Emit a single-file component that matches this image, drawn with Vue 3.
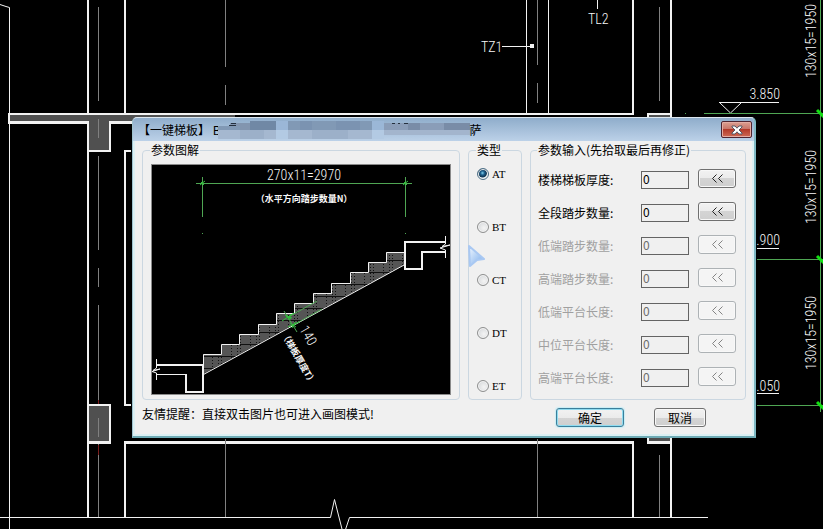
<script setup>
import { reactive, ref } from 'vue'

const types = ['AT', 'BT', 'CT', 'DT', 'ET']
const selected = ref('AT')

const params = reactive([
  { id: 'thickness', label: '楼梯梯板厚度:', value: '0', enabled: true },
  { id: 'steps', label: '全段踏步数量:', value: '0', enabled: true },
  { id: 'low-steps', label: '低端踏步数量:', value: '0', enabled: false },
  { id: 'high-steps', label: '高端踏步数量:', value: '0', enabled: false },
  { id: 'low-landing', label: '低端平台长度:', value: '0', enabled: false },
  { id: 'mid-landing', label: '中位平台长度:', value: '0', enabled: false },
  { id: 'high-landing', label: '高端平台长度:', value: '0', enabled: false }
])

const levels = [113, 259, 405]
const risers = [41, 187, 333]
</script>

<template>
  <main class="workspace">
    <svg class="plan" aria-hidden="true">
      <!-- slab and columns -->
      <g class="fill-slab">
        <rect x="10" y="115" width="225" height="7" />
        <rect x="89" y="120" width="21" height="31" />
        <rect x="89" y="406" width="21" height="36" />
        <rect x="649" y="115" width="21" height="4" />
        <rect x="649" y="436" width="21" height="5" />
      </g>
      <g class="fill-white">
        <rect x="87" y="0" width="2" height="113" />
        <rect x="124" y="0" width="2" height="113" />
        <rect x="8" y="113" width="626" height="2" />
        <rect x="8" y="113" width="2" height="11" />
        <rect x="8" y="121" width="81" height="3" />
        <rect x="109" y="121" width="26" height="3" />
        <rect x="109" y="121" width="2" height="31" />
        <rect x="89" y="150" width="22" height="2" />
        <rect x="87" y="121" width="2" height="396" />
        <rect x="124" y="150" width="7" height="2" />
        <rect x="124" y="150" width="2" height="256" />
        <rect x="124" y="404" width="7" height="2" />
        <rect x="87" y="404" width="24" height="2" />
        <rect x="109" y="404" width="2" height="40" />
        <rect x="87" y="441" width="24" height="3" />
        <rect x="124" y="441" width="2" height="76" />
        <rect x="124" y="441" width="510" height="3" />
        <rect x="632" y="441" width="2" height="76" />
        <rect x="632" y="0" width="2" height="115" />
        <rect x="670" y="0" width="2" height="117" />
        <rect x="647" y="113" width="25" height="2" />
        <rect x="647" y="113" width="2" height="4" />
        <rect x="647" y="436" width="2" height="8" />
        <rect x="647" y="441" width="25" height="3" />
        <rect x="670" y="436" width="2" height="81" />
        <rect x="530" y="44" width="4" height="4" />
      </g>
      <g class="thin">
        <path d="M0 4.500L3 5.500L6 6.500L9.500 7.500V529" />
        <path d="M0 517.500H330.500L334.500 499.500L342.500 531H345L349.500 517.500H708" />
        <path d="M526.500 0V113M548.500 0V113M502 46.500H530M597.500 0V9" />
        <path d="M719 102.500H779M719.500 102.500L730.500 113L741.500 102.500M757 248.500H779M757 393.500H779" />
      </g>
      <g class="axis">
        <path d="M98.500 7V101M98.500 119V138M98.500 156V250M98.500 268V287M98.500 305V404M98.500 418V437M98.500 444V517" />
        <path d="M225.500 0V67M225.500 85V105M225.500 439V517" />
        <path d="M537.500 0V65M537.500 83V103M537.500 439V517" />
        <path d="M659.500 7V101M659.500 455V517" />
      </g>
      <path class="red" d="M98.500 400V404M98.500 445V455" />
      <g class="green">
        <path d="M704 113.500H823M757 259.500H823M757 405.500H823M820.500 0V412" />
        <path d="M685 113.500H686" />
      </g>
      <path v-for="y in levels" :key="y" class="tick" :d="`M817 ${y - 3}L824 ${y + 4}`" />
      <g class="cad">
        <text x="481" y="52">TZ1</text>
        <text x="588" y="24">TL2</text>
        <text x="780" y="99" text-anchor="end">3.850</text>
        <text x="780" y="245" text-anchor="end">.900</text>
        <text x="780" y="391" text-anchor="end">.050</text>
        <text
          v-for="y in risers"
          :key="y"
          :transform="`translate(816 ${y}) rotate(-90)`"
          text-anchor="middle"
        >130x15=1950</text>
      </g>
    </svg>

    <section class="dialog" role="dialog" aria-labelledby="dialog-title">
      <header class="titlebar">
        <h1 id="dialog-title" class="title">
          <span>【一键梯板】 B</span>
          <svg class="mosaic" viewBox="0 0 252 18" aria-hidden="true">
            <path fill="#8295af" d="M12 2H58V9H12z" />
            <path fill="#7088a5" d="M32 0H58V9H32z" />
            <path fill="#8199b5" d="M0 5H22V9H0zM70 0H154V9H70z" />
            <path fill="#7b93b1" d="M82 0H94V9H82zM118 0H142V9H118z" />
            <path fill="#8a9db8" d="M166 2H252V9H166z" />
            <path fill="#798ca7" d="M190 2H202V9H190zM226 2H252V9H226z" />
            <path fill="#9bb7d7" d="M58 0H70V9H58zM154 0H166V9H154z" />
            <path fill="#a5b8d0" d="M0 9H58V18H0zM70 9H154V18H70z" />
            <path fill="#9cb0c9" d="M22 9H46V18H22zM94 9H130V18H94z" />
            <path fill="#b3cae3" d="M58 9H70V18H58zM154 9H166V18H154z" />
            <path fill="#a3b5cd" d="M166 9H252V14H166z" />
            <path fill="#25303e" d="M13 2h5v1h-5zM11 4h7v1h-7zM174 2h3v1h-3zM180 2h2v1h-2zM186 2h4v1h-4z" />
          </svg>
          <span>萨</span>
        </h1>
        <button class="close" type="button" aria-label="关闭">
          <svg viewBox="0 0 12 10" width="12" height="10" aria-hidden="true">
            <path d="M1 1H4L6 3.200L8 1H11V2L8 5L11 8V9H8L6 6.800L4 9H1V8L4 5L1 2Z" />
          </svg>
        </button>
      </header>

      <form class="body" @submit.prevent>
        <div class="panels">
          <fieldset class="group preview">
            <legend>参数图解</legend>
            <svg class="diagram" viewBox="152 165 298 229" role="img" aria-label="参数图解">
              <defs>
                <pattern id="hatch" width="19" height="12" patternUnits="userSpaceOnUse">
                  <rect width="19" height="12" fill="#555" />
                  <path d="M0 8.500H19" stroke="#111" />
                  <path d="M3.500 0V12M9.500 0V12M12.500 0V12" stroke="#111" stroke-dasharray="1 2" />
                </pattern>
              </defs>
              <path
                fill="url(#hatch)"
                d="M203 374V354H221V344H239V334H258V324H276V313H294V303H313V293H331V283H350V272H368V262H386V252H404V265Z"
              />
              <path
                class="thin"
                d="M203.500 374V354.500H221.500V344.500H239.500V334.500H258.500V324.500H276.500V313.500H294.500V303.500H313.500V293.500H331.500V283.500H350.500V272.500H368.500V262.500H386.500V252.500H405M203.500 374.500L405 264.500"
              />
              <path class="thick" d="M157 365H203V392H186V374M445 242H405V269H422V252H445" />
              <path class="thin" d="M157 374.500H186M156.500 359V368L153 370.500L160 369L152 371.500L156.500 373V380" />
              <path class="thin" d="M445.500 236V244L442 246.500L450 245L440 248L445.500 250V258" />
              <path class="green" d="M196 183.500H412M202.500 177V217M405.500 177V217M202 233.500H203M405 233.500H406" />
              <path class="spark" d="M200 185L205 181M201 182L204 185M403 185L408 181M404 182L407 185" />
              <path class="green" d="M284 311L297 332M288.500 317L317 301M293.500 325L322 309" />
              <path
                class="spark"
                d="M282 321L294 313M285 315L292 318M288 320L291 314M286 316L291 319M288 327L299 322M290 323L296 327M292 328L295 322"
              />
              <g class="cad">
                <text x="304" y="180" text-anchor="middle">270x11=2970</text>
                <text class="note" x="304" y="202" text-anchor="middle">（水平方向踏步数量N）</text>
                <text transform="translate(299 329) rotate(60)">140</text>
                <text class="note" transform="translate(281 334) rotate(60)">（梯板厚度T）</text>
              </g>
            </svg>
          </fieldset>

          <fieldset class="group types">
            <legend>类型</legend>
            <label v-for="t in types" :key="t" class="type">
              <input v-model="selected" type="radio" name="type" :value="t" />
              <span>{{ t }}</span>
            </label>
          </fieldset>

          <fieldset class="group params">
            <legend>参数输入(先拾取最后再修正)</legend>
            <div v-for="p in params" :key="p.id" class="row" :class="{ off: !p.enabled }">
              <label :for="p.id">{{ p.label }}</label>
              <input :id="p.id" v-model="p.value" type="text" :disabled="!p.enabled" />
              <button type="button" class="btn" :disabled="!p.enabled" :aria-label="`拾取 ${p.label}`">
                <svg viewBox="0 0 12 9" width="12" height="9" aria-hidden="true">
                  <path d="M5.500 0.500L1.500 4.500L5.500 8.500M11.500 0.500L7.500 4.500L11.500 8.500" />
                </svg>
              </button>
            </div>
          </fieldset>
        </div>

        <footer class="footer">
          <p class="hint">友情提醒：直接双击图片也可进入画图模式!</p>
          <button type="submit" class="btn ok">确定</button>
          <button type="button" class="btn cancel">取消</button>
        </footer>
      </form>
    </section>

    <svg class="pointer" viewBox="0 0 20 26" width="20" height="26" aria-hidden="true">
      <defs>
        <linearGradient id="arrow" x1="0" y1="0" x2="1" y2="1">
          <stop offset="0" stop-color="#f2f8ff" />
          <stop offset="1" stop-color="#74a9ea" />
        </linearGradient>
      </defs>
      <path d="M2 3L17 16L10 17L3 23Z" fill="url(#arrow)" stroke="#a9c8f2" stroke-width="2" stroke-linejoin="round" />
    </svg>
  </main>
</template>

<style>
body {
  margin: 0;
  background: #000;
}
</style>

<style scoped>
.workspace {
  position: relative;
  min-height: 100vh;
  overflow: hidden;
  background: #000;
  font: 12px/14px "Noto Sans CJK SC", sans-serif;
  color: #000;
}
.plan {
  position: absolute;
  inset: 0;
  width: 100%;
  height: 100%;
}
.fill-slab { fill: #505050; }
.fill-white { fill: #f2f2f2; }
.thin { fill: none; stroke: #f2f2f2; stroke-width: 1; }
.thick { fill: none; stroke: #f2f2f2; stroke-width: 2; }
.axis { fill: none; stroke: #808080; }
.red { fill: none; stroke: #7a1d1d; }
.green { fill: none; stroke: #4fa653; }
.tick { fill: none; stroke: #12e012; stroke-width: 3; }
.spark { fill: none; stroke: #2fc43a; }
.cad {
  fill: #f8f8f8;
  font-family: "Roboto Condensed", Roboto, sans-serif;
  font-size: 14px;
  font-weight: 300;
}
.cad .note {
  font-family: "Noto Sans CJK SC", sans-serif;
  font-size: 9px;
  font-weight: 700;
}

.dialog {
  position: absolute;
  left: 132px;
  top: 117px;
  width: 624px;
  box-sizing: border-box;
  border: 1px solid #9fc3cf;
  border-top-color: #dce6ee;
  border-right: 2px solid #7fb9c4;
  border-bottom: 2px solid #6fabb5;
  border-radius: 5px 5px 0 0;
  background: #f0f0f0;
  box-shadow: inset 0 0 0 2px #dcf0f3;
  overflow: hidden;
}
.titlebar {
  display: flex;
  align-items: center;
  justify-content: space-between;
  height: 23px;
  padding: 0 2px 0 5px;
  background: linear-gradient(#8fadcb, #bcd1e8);
}
.title {
  display: flex;
  align-items: center;
  margin: 0;
  font-size: 12px;
  font-weight: 400;
  line-height: 23px;
  white-space: pre;
}
.mosaic { width: 252px; height: 18px; margin-left: -3px; }
.close {
  display: flex;
  align-items: center;
  justify-content: center;
  width: 31px;
  height: 17px;
  padding: 0;
  border: 1px solid #4f2430;
  border-radius: 2px;
  background: linear-gradient(#dca092 0, #c9766a 45%, #b33a2a 50%, #cf6a55 100%);
  box-shadow: inset 0 0 0 1px #e4aca3;
}
.close path { fill: #fff; stroke: #555763; stroke-width: 1; }

.body { padding: 2px 8px 0 9px; }
.panels {
  display: grid;
  grid-template-columns: 318px 54px 1fr;
  gap: 8px;
}
.group {
  box-sizing: border-box;
  min-width: 0;
  margin: 0;
  border: 1px solid #cbd7e1;
  border-radius: 4px;
}
.group legend {
  height: 14px;
  padding: 0 1px;
  line-height: 14px;
  white-space: nowrap;
}
.preview { padding: 7px 8px 4px; }
.preview legend { margin-left: -1px; }
.diagram {
  display: block;
  box-sizing: border-box;
  width: 100%;
  border: 1px solid #8a8a8a;
  background: #000;
}
.types {
  display: flex;
  flex-direction: column;
  justify-content: space-between;
  padding: 10px 7px 6px 8px;
}
.types legend { margin-left: -1px; }
.type {
  display: flex;
  align-items: center;
  gap: 3px;
  height: 14px;
  font-family: "Liberation Serif", serif;
  font-size: 11px;
}
.type input {
  appearance: none;
  flex: none;
  box-sizing: border-box;
  width: 12px;
  height: 12px;
  margin: 0;
  border: 1px solid #8e8f8f;
  border-radius: 50%;
  background: radial-gradient(circle at 60% 60%, #f4f4f4, #cfd2d5);
  box-shadow: inset 0 0 0 1px #f4f4f4;
}
.type input:checked {
  border-color: #4d6f86;
  background: radial-gradient(circle at 45% 40%, #7fd0ee 0, #1d5f8c 2px, #0f3350 4px, #e8f0f4 5px);
}
.params { padding: 6px 9px 5px 7px; }
.params legend { margin-left: -1px; }
.row {
  display: grid;
  grid-template-columns: 1fr 48px 38px;
  column-gap: 9px;
  align-items: center;
  height: 33px;
}
.row.off { color: #a0a0a0; }
.row input {
  box-sizing: border-box;
  width: 100%;
  height: 18px;
  padding: 0 1px 2px;
  border: 1px solid #646464;
  background: #f0f0f0;
  color: #000;
  font: 12px/14px "Noto Sans CJK SC", sans-serif;
}
.row.off input { color: #6d6d6d; }
.btn {
  box-sizing: border-box;
  height: 19px;
  padding: 0;
  border: 1px solid #707070;
  border-radius: 3px;
  background: linear-gradient(#f2f2f2 0, #ebebeb 50%, #d4d4d4 50%, #cfcfcf 100%);
  box-shadow: inset 0 0 0 1px #f8f8f8;
  color: #000;
  font: 12px/14px "Noto Sans CJK SC", sans-serif;
}
.row .btn {
  display: flex;
  align-items: center;
  justify-content: center;
  margin-bottom: 2px;
}
.row .btn path { fill: none; stroke: #222; }
.row .btn:disabled { border-color: #adb2b5; background: #f4f4f4; }
.row .btn:disabled path { stroke: #838383; }
.footer {
  display: flex;
  align-items: flex-start;
  height: 28px;
  padding: 8px 40px 0 0;
}
.hint { flex: 1; margin: 0; line-height: 12px; white-space: nowrap; }
.ok {
  width: 68px;
  margin-right: 30px;
  border-color: #3c7f9b;
  box-shadow: inset 0 0 0 1px #8fdcf0, 0 0 1px 1px #c8eef6;
}
.cancel { width: 52px; }

.pointer {
  position: absolute;
  left: 467px;
  top: 243px;
}
</style>
